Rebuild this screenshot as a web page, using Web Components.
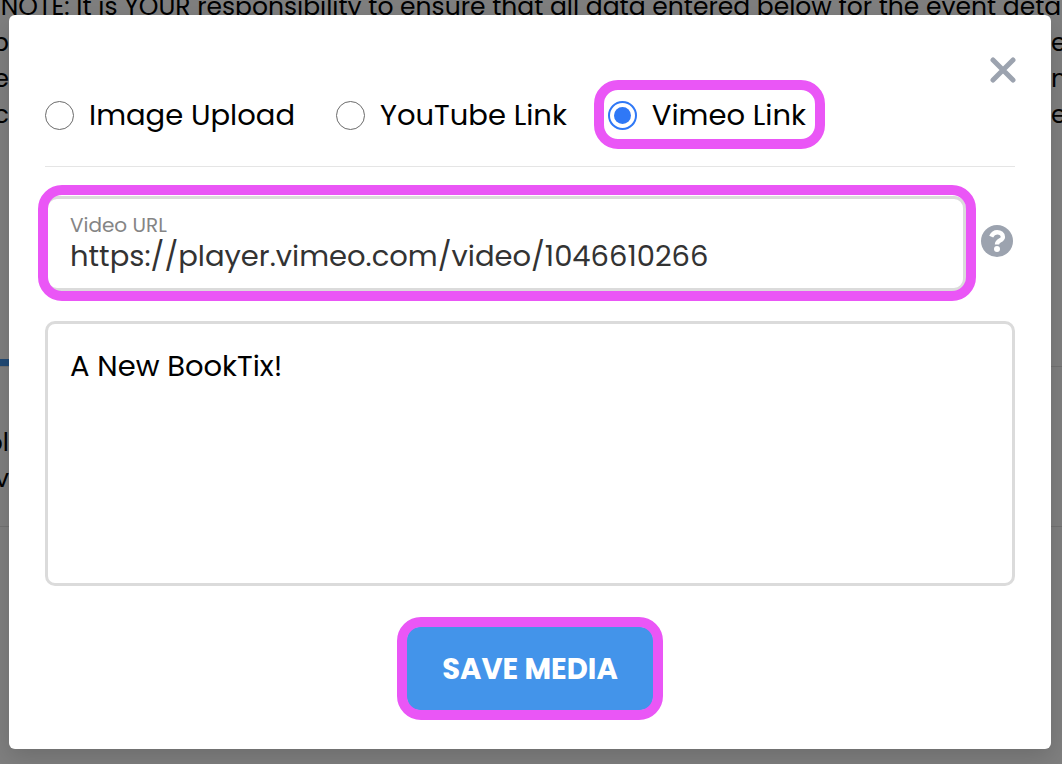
<!DOCTYPE html>
<html lang="en">
<head>
<meta charset="utf-8">
<meta name="viewport" content="width=device-width, initial-scale=1">
<title>Add Media</title>
<style>
    :root {
        --color-primary: #4394ea;
        --color-highlight: #ea56f6;
        --color-border: #dbdbdb;
        --color-icon: #9ca3af;
    }

    body {
        margin: 0;
        min-height: 100vh;
        display: grid;
        grid-template-columns: minmax(0, 1fr);
        overflow: hidden;
        background: #fff;
        color: #000;
        font-family: Poppins, Inter, "Open Sans", sans-serif;
        font-size: 29px;
    }

    event-page, media-modal {
        grid-area: 1 / 1;
    }
</style>
</head>
<body>
<event-page></event-page>
<media-modal>
    <media-option value="image">Image Upload</media-option>
    <media-option value="youtube">YouTube Link</media-option>
    <media-option value="vimeo" checked>Vimeo Link</media-option>
    <url-field slot="url" label="Video URL" value="https://player.vimeo.com/video/1046610266"></url-field>
    <caption-field slot="caption">A New BookTix!</caption-field>
    <save-button slot="action">SAVE MEDIA</save-button>
</media-modal>

<script>
const define = (name, css, html, setup = () => {}) => {
    const template = document.createElement('template')
    template.innerHTML = `<style>* { box-sizing: border-box; } ${css}</style>${html}`

    window.customElements.define(name, class extends HTMLElement {
        constructor() {
            super()

            this
                .attachShadow({ mode: 'open' })
                .appendChild(template.content.cloneNode(true))
        }

        connectedCallback() { setup(this, this.shadowRoot) }
    })
}

// The page underneath, of which only the edges show
define('event-page', `
    :host {
        display: block;
        overflow: hidden;
        font-size: 25px;
        line-height: 36px;
    }

    p {
        margin: -11px 0 0;
        white-space: nowrap;
        display: flex;
        justify-content: center;
    }

    .row {
        display: grid;
        grid-template-columns: 9px minmax(0, 1fr) 11px;
        height: 36px;
    }

    .row span:first-child {
        display: flex;
        justify-content: flex-end;
    }

    .row span + span {
        grid-column: 3;
    }

    .tabs {
        margin-top: 226px;
        border-bottom: 1px solid #e5e5e5;
    }

    .tabs i {
        display: block;
        width: 10%;
        height: 7px;
        background: var(--color-primary);
    }

    .details {
        padding: 58px 0 29px;
        border-bottom: 1px solid #e5e5e5;
    }
`, `
    <p>NOTE: It is YOUR responsibility to ensure that all data entered below for the event deta</p>
    <div class="row"><span>p</span><span>e</span></div>
    <div class="row"><span>re</span><span>n</span></div>
    <div class="row"><span>c</span><span>ed</span></div>
    <div class="tabs"><i></i></div>
    <div class="details">
        <div class="row"><span>ol</span></div>
        <div class="row"><span>v</span></div>
    </div>
`)

define('highlight-ring', `
    :host {
        display: block;
        position: relative;
    }

    :host::after {
        content: "";
        position: absolute;
        inset: var(--ring-inset, -10px);
        border: 10px solid var(--color-highlight);
        border-radius: 24px;
        pointer-events: none;
    }
`, `<slot></slot>`)

define('media-option', `
    :host {
        display: block;
    }

    label {
        display: flex;
        align-items: center;
        gap: 15px;
        line-height: 42px;
        white-space: nowrap;
    }

    input {
        appearance: none;
        flex: none;
        display: grid;
        place-items: center;
        width: 29px;
        height: 29px;
        margin: 0;
        border: 1px solid #6b6b6b;
        border-radius: 50%;
        background: #fff;
    }

    input:checked {
        border: 2px solid #2f78f6;
    }

    input:checked::before {
        content: "";
        width: 17px;
        height: 17px;
        border-radius: 50%;
        background: #2f78f6;
    }

    highlight-ring {
        --ring-inset: -14px -19px -13px -14px;
    }
`, `<label><input type="radio" name="media"><slot></slot></label>`, (host, root) => {
    const input = root.querySelector('input')
    input.value = host.getAttribute('value')
    input.checked = host.hasAttribute('checked')

    if (input.checked) {
        const ring = document.createElement('highlight-ring')
        ring.append(root.querySelector('label'))
        root.append(ring)
    }

    // Radios in separate shadow roots do not share a group
    input.onchange = () => host.parentElement.querySelectorAll('media-option').forEach(option => {
        option.shadowRoot.querySelector('input').checked = option === host
    })
})

define('help-button', `
    :host {
        display: block;
    }

    button {
        display: block;
        padding: 0;
        border: 0;
        background: none;
        color: var(--color-icon);
    }

    svg {
        display: block;
    }
`, `
    <button type="button" aria-label="Help">
        <svg width="32" height="32" viewBox="0 0 32 32">
            <circle cx="16" cy="16" r="16" fill="currentColor"/>
            <path d="M10.2 11.6C11.6 8.6 13.4 7.2 16.2 7.2C19.4 7.2 21.9 9.2 21.9 12C21.9 15.6 16 15.4 16 19.4" fill="none" stroke="#fff" stroke-width="4.4"/>
            <circle cx="16" cy="24" r="3" fill="#fff"/>
        </svg>
    </button>
`)

define('url-field', `
    :host {
        display: flex;
        align-items: center;
        gap: 15px;
    }

    highlight-ring {
        flex: 1;
        --ring-inset: -11px -10px -10px -7px;
    }

    .box {
        height: 95px;
        padding: 14px 22px;
        border: 3px solid var(--color-border);
        border-radius: 12px;
    }

    label {
        display: block;
        font-size: 20px;
        line-height: 24px;
        color: #858585;
    }

    input {
        display: block;
        width: 100%;
        height: 38px;
        padding: 0;
        border: 0;
        outline: 0;
        background: none;
        color: #333;
        font: inherit;
    }

    help-button {
        margin: 0 2px 6px 0;
    }
`, `
    <highlight-ring>
        <div class="box">
            <label for="url"></label>
            <input id="url" type="text">
        </div>
    </highlight-ring>
    <help-button></help-button>
`, (host, root) => {
    root.querySelector('label').textContent = host.getAttribute('label')
    root.querySelector('input').value = host.getAttribute('value')
})

define('caption-field', `
    :host {
        display: block;
    }

    textarea {
        display: block;
        width: 100%;
        height: 265px;
        padding: 21px 22px;
        border: 3px solid var(--color-border);
        border-radius: 10px;
        outline: 0;
        resize: none;
        color: inherit;
        font: inherit;
        line-height: 42px;
    }
`, `<textarea aria-label="Caption"></textarea>`, (host, root) => {
    root.querySelector('textarea').value = host.textContent
})

define('save-button', `
    :host {
        display: block;
    }

    button {
        display: block;
        padding: 20px 35px 19px;
        border: 0;
        border-radius: 12px;
        background: var(--color-primary);
        color: #fff;
        font: inherit;
        font-weight: 700;
        line-height: 44px;
    }
`, `<highlight-ring><button type="button"><slot></slot></button></highlight-ring>`)

define('media-modal', `
    :host {
        display: block;
        position: relative;
        padding: 15px 11px 15px 9px;
        background: rgba(0, 0, 0, 0.5);
    }

    section {
        position: relative;
        padding: 79px 36px 39px;
        border-radius: 6px;
        background: #fff;
        box-shadow: 0 8px 24px rgba(0, 0, 0, 0.15);
    }

    .close {
        position: absolute;
        top: 42px;
        right: 35px;
        padding: 0;
        border: 0;
        background: none;
        color: var(--color-icon);
    }

    .close svg {
        display: block;
    }

    .options {
        display: flex;
        gap: 41px;
        padding-bottom: 30px;
        border-bottom: 1px solid #e5e5e5;
    }

    slot[name="url"] {
        display: block;
        margin: 29px 0 30px;
    }

    slot[name="action"] {
        display: flex;
        justify-content: center;
        margin-top: 41px;
    }
`, `
    <section role="dialog" aria-label="Add Media">
        <button class="close" type="button" aria-label="Close">
            <svg width="26" height="26" viewBox="0 0 26 26">
                <path d="M3 3L23 23M23 3L3 23" stroke="currentColor" stroke-width="5" stroke-linecap="round"/>
            </svg>
        </button>
        <div class="options"><slot></slot></div>
        <slot name="url"></slot>
        <slot name="caption"></slot>
        <slot name="action"></slot>
    </section>
`)
</script>
</body>
</html>
